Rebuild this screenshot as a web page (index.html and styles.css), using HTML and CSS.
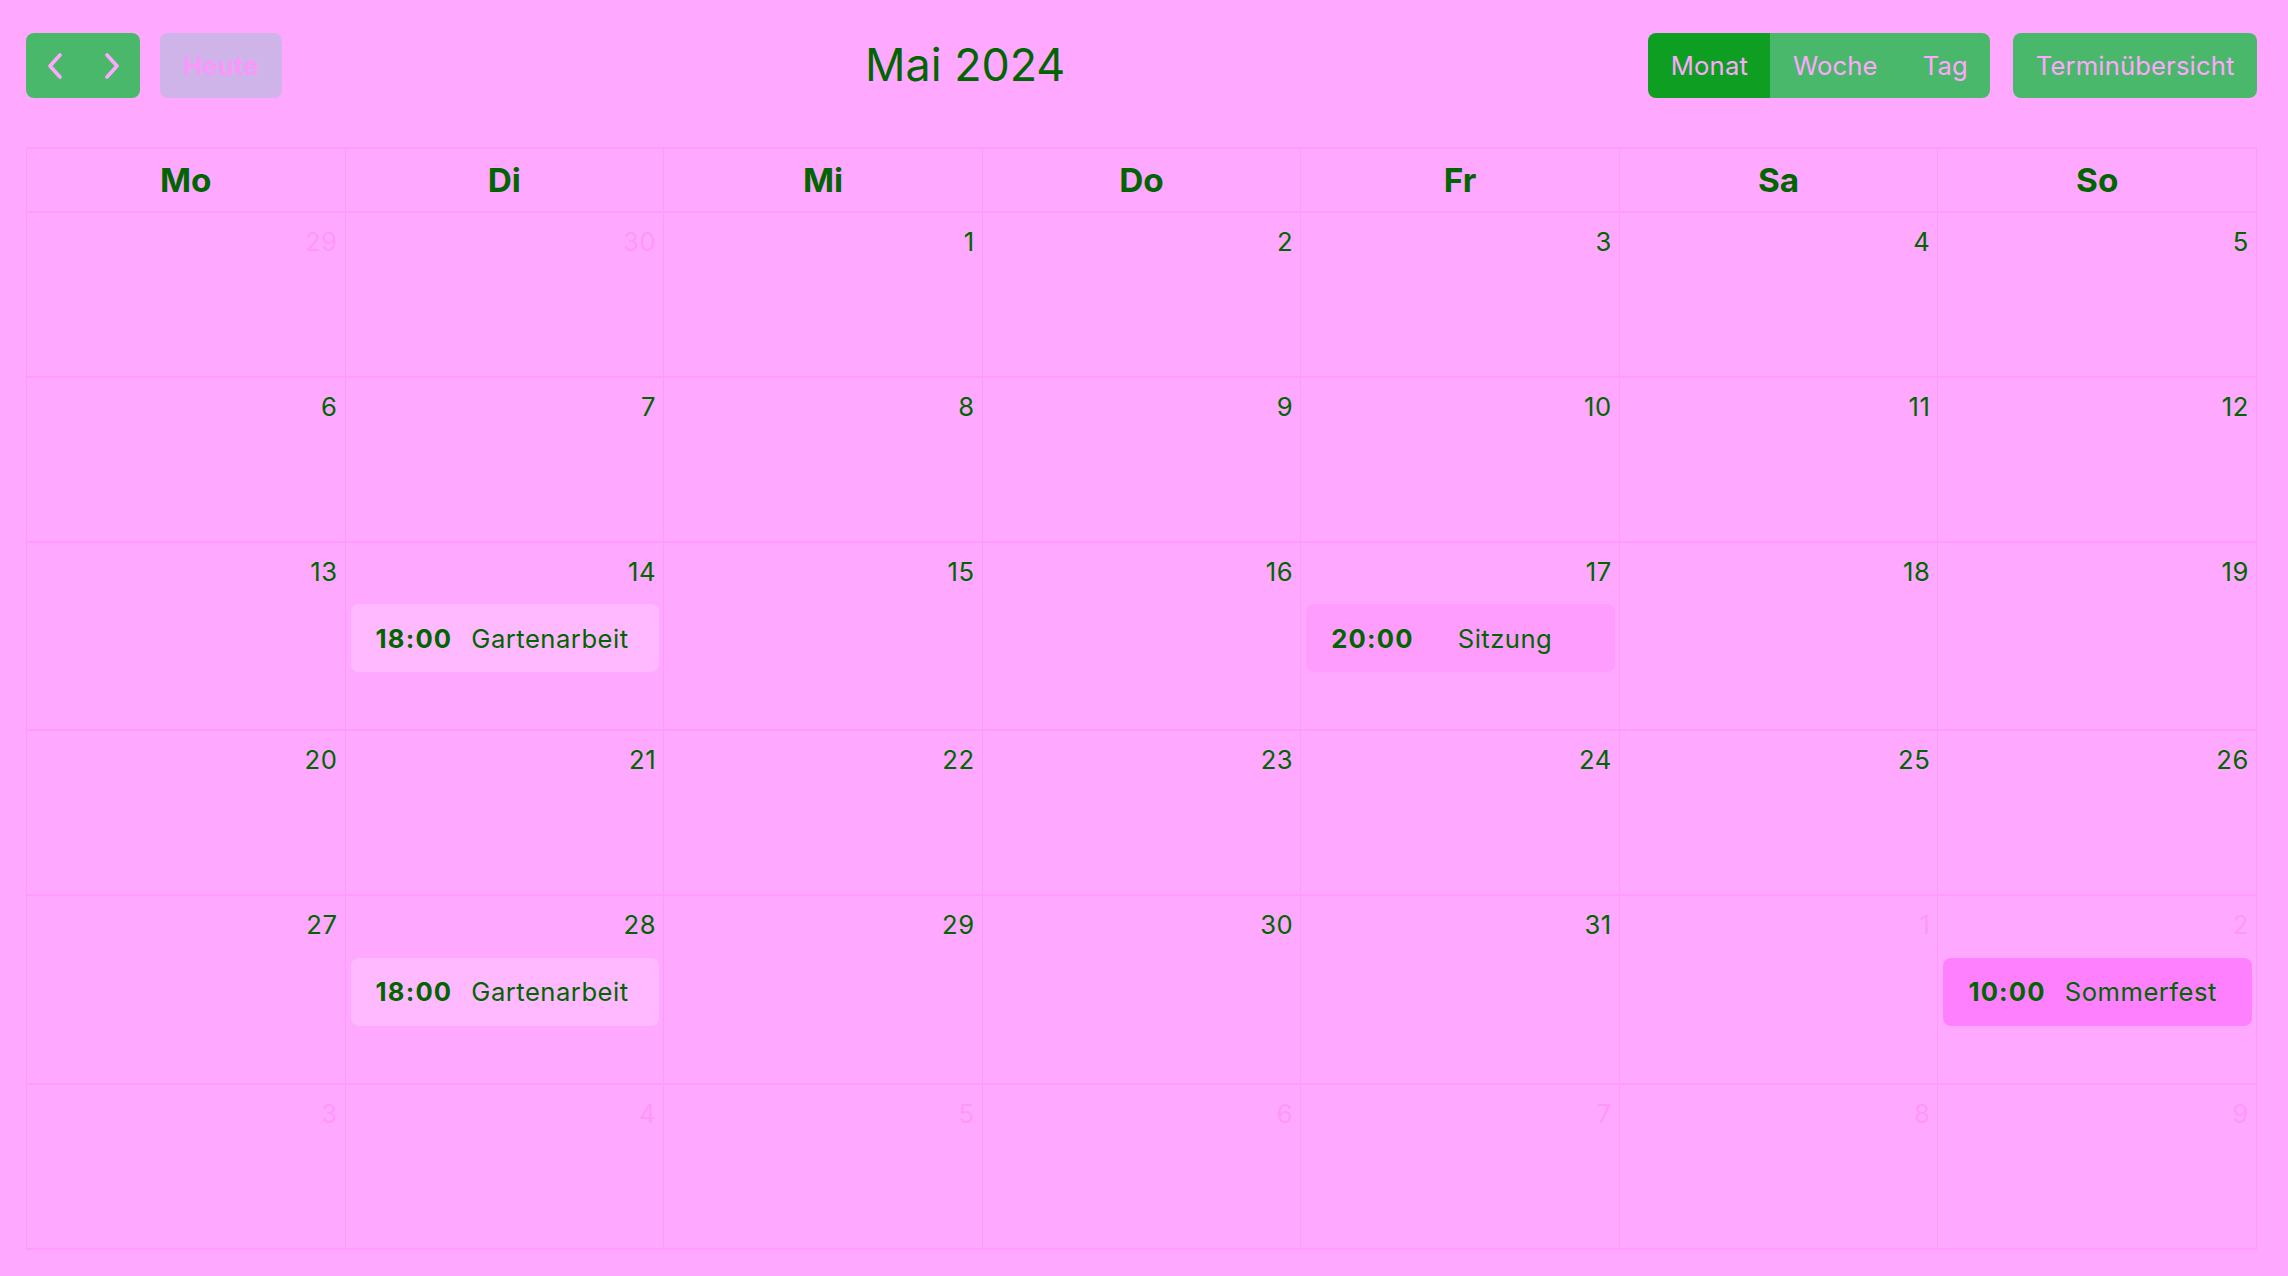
FILE: index.html
```html
<!DOCTYPE html>
<html lang="de">
<head>
<meta charset="utf-8">
<title>Kalender Mai 2024</title>
<link rel="stylesheet" href="styles.css">
</head>
<body>
<div class="cal">
  <div class="toolbar">
    <div class="chunk">
      <div class="group">
        <button class="btn nav-btn" aria-label="Zurück"><svg width="16" height="26" viewBox="0 0 16 26"><path d="M13 2 L3 13 L13 24" fill="none" stroke="currentColor" stroke-width="3.6" stroke-linecap="round" stroke-linejoin="round"/></svg></button>
        <button class="btn nav-btn" aria-label="Weiter"><svg width="16" height="26" viewBox="0 0 16 26"><path d="M3 2 L13 13 L3 24" fill="none" stroke="currentColor" stroke-width="3.6" stroke-linecap="round" stroke-linejoin="round"/></svg></button>
      </div>
      <button class="btn today" disabled>Heute</button>
    </div>
    <h2 class="title">Mai 2024</h2>
    <div class="chunk">
      <div class="group">
        <button class="btn active">Monat</button>
        <button class="btn">Woche</button>
        <button class="btn">Tag</button>
      </div>
      <button class="btn single">Terminübersicht</button>
    </div>
  </div>

  <div class="grid">
    <div class="head">
      <div class="hcell">Mo</div><div class="hcell">Di</div><div class="hcell">Mi</div><div class="hcell">Do</div><div class="hcell">Fr</div><div class="hcell">Sa</div><div class="hcell">So</div>
    </div>

    <div class="week">
      <div class="day other"><div class="num">29</div></div>
      <div class="day other"><div class="num">30</div></div>
      <div class="day"><div class="num">1</div></div>
      <div class="day"><div class="num">2</div></div>
      <div class="day"><div class="num">3</div></div>
      <div class="day"><div class="num">4</div></div>
      <div class="day"><div class="num">5</div></div>
    </div>

    <div class="week">
      <div class="day"><div class="num">6</div></div>
      <div class="day"><div class="num">7</div></div>
      <div class="day"><div class="num">8</div></div>
      <div class="day"><div class="num">9</div></div>
      <div class="day"><div class="num">10</div></div>
      <div class="day"><div class="num">11</div></div>
      <div class="day"><div class="num">12</div></div>
    </div>

    <div class="week">
      <div class="day"><div class="num">13</div></div>
      <div class="day"><div class="num">14</div>
        <div class="event ev-light"><span class="time">18:00</span><span class="etitle">Gartenarbeit</span></div>
      </div>
      <div class="day"><div class="num">15</div></div>
      <div class="day"><div class="num">16</div></div>
      <div class="day"><div class="num">17</div>
        <div class="event ev-mid"><span class="time time-wide">20:00</span><span class="etitle">Sitzung</span></div>
      </div>
      <div class="day"><div class="num">18</div></div>
      <div class="day"><div class="num">19</div></div>
    </div>

    <div class="week">
      <div class="day"><div class="num">20</div></div>
      <div class="day"><div class="num">21</div></div>
      <div class="day"><div class="num">22</div></div>
      <div class="day"><div class="num">23</div></div>
      <div class="day"><div class="num">24</div></div>
      <div class="day"><div class="num">25</div></div>
      <div class="day"><div class="num">26</div></div>
    </div>

    <div class="week">
      <div class="day"><div class="num">27</div></div>
      <div class="day"><div class="num">28</div>
        <div class="event ev-light"><span class="time">18:00</span><span class="etitle">Gartenarbeit</span></div>
      </div>
      <div class="day"><div class="num">29</div></div>
      <div class="day"><div class="num">30</div></div>
      <div class="day"><div class="num">31</div></div>
      <div class="day other"><div class="num">1</div></div>
      <div class="day other"><div class="num">2</div>
        <div class="event ev-strong"><span class="time">10:00</span><span class="etitle">Sommerfest</span></div>
      </div>
    </div>

    <div class="week">
      <div class="day other"><div class="num">3</div></div>
      <div class="day other"><div class="num">4</div></div>
      <div class="day other"><div class="num">5</div></div>
      <div class="day other"><div class="num">6</div></div>
      <div class="day other"><div class="num">7</div></div>
      <div class="day other"><div class="num">8</div></div>
      <div class="day other"><div class="num">9</div></div>
    </div>
  </div>
</div>
</body>
</html>
```

FILE: styles.css
```css
html, body {
  margin: 0;
  padding: 0;
  background: #ffa8ff;
}

body {
  font-family: Inter, "Noto Sans", "Liberation Sans", sans-serif;
  font-size: 25.6px;
  color: #006400;
}

.cal {
  padding: 33px 31px 0 26px;
}

.toolbar {
  display: flex;
  justify-content: space-between;
  align-items: center;
  height: 65px;
  margin-bottom: 49px;
}

.chunk {
  display: flex;
  align-items: center;
}

.group {
  display: flex;
}

.btn {
  font-family: inherit;
  font-size: 25.6px;
  letter-spacing: 0.15px;
  height: 65px;
  padding: 0 22.5px;
  border: none;
  margin: 0;
  background: #4ab86a;
  color: #ffa8ff;
  display: inline-flex;
  align-items: center;
  justify-content: center;
  line-height: 1;
  cursor: pointer;
}

.group .btn {
  border-radius: 0;
}

.group .btn:first-child {
  border-radius: 8px 0 0 8px;
}

.group .btn:last-child {
  border-radius: 0 8px 8px 0;
}

.btn.active {
  background: #0e9f22;
}

.nav-btn {
  width: 57px;
  padding: 0;
}

.today {
  margin-left: 20px;
  width: 122px;
  padding: 0;
  border-radius: 8px;
  background: #cfb4ea;
  color: #fb96fb;
  font-weight: 700;
  cursor: default;
}

.single {
  margin-left: 23px;
  border-radius: 8px;
}

.title {
  margin: 0;
  font-size: 44.8px;
  font-weight: 400;
  color: #006400;
  line-height: 1.2;
}

.grid {
  border-right: 1px solid #ff98ff;
  border-bottom: 2px solid #ff9bff;
}

.head,
.week {
  display: grid;
  grid-template-columns: repeat(7, 1fr);
  border-top: 2px solid #ff9bff;
}

.hcell {
  height: 62px;
  display: flex;
  align-items: center;
  justify-content: center;
  font-size: 33.3px;
  font-weight: 700;
  border-left: 1px solid #ff98ff;
}

.day {
  min-height: 163px;
  border-left: 1px solid #ff98ff;
  display: flex;
  flex-direction: column;
}

.num {
  text-align: right;
  padding: 10px 7px 0 0;
  line-height: 38.4px;
  height: 38.4px;
  letter-spacing: 0.6px;
}

.other .num {
  color: #ff97fb;
}

.event {
  display: flex;
  align-items: center;
  margin: 13px 4px 57px 5px;
  padding: 0 25px;
  height: 68px;
  border-radius: 8px;
  white-space: nowrap;
}

.etitle {
  letter-spacing: 0.5px;
}

.ev-light {
  background: #ffb9ff;
}

.ev-mid {
  background: #ff9dff;
}

.ev-strong {
  background: #ff80ff;
}

.time {
  font-weight: 700;
  letter-spacing: 1.2px;
  margin-right: 19px;
}

.time-wide {
  margin-right: 44px;
}
```
